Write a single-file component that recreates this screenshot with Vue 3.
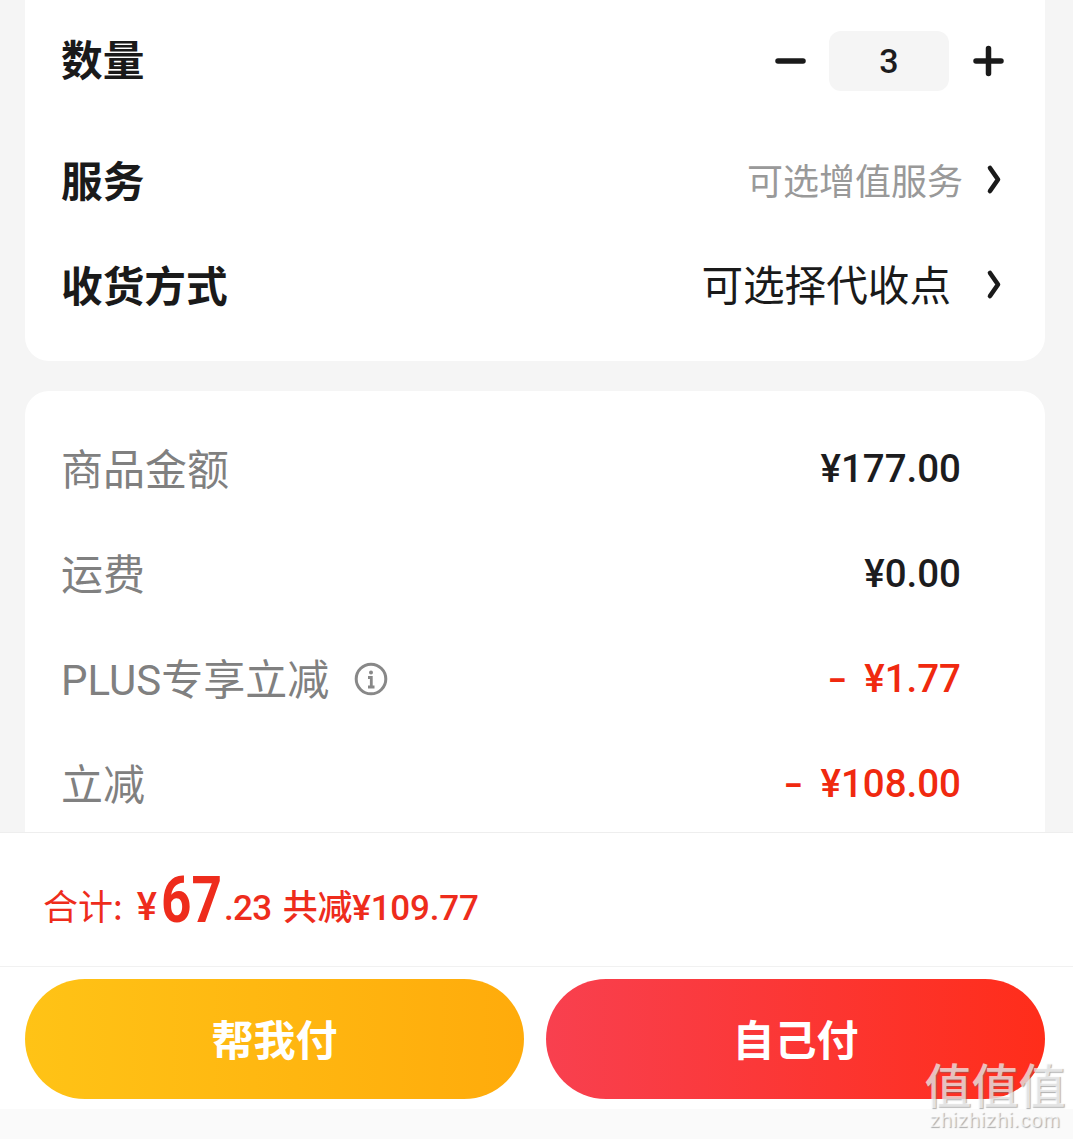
<template>
  <div class="page">
    <div class="scroll">
      <section class="card first">
        <div class="row qty">
          <span class="label strong">数量</span>
          <div class="stepper">
            <svg class="step" width="34" height="34" viewBox="0 0 34 34"><path d="M5 17H30" /></svg>
            <span class="num">3</span>
            <svg class="step" width="34" height="34" viewBox="0 0 34 34"><path d="M5 17H30M17.5 4.5V29.5" /></svg>
          </div>
        </div>
        <div class="row">
          <span class="label strong">服务</span>
          <div class="right">
            <span class="hint">可选增值服务</span>
            <svg class="chev" width="20" height="34" viewBox="0 0 20 34"><path d="M5 5L13 16.5L5 28" /></svg>
          </div>
        </div>
        <div class="row">
          <span class="label strong">收货方式</span>
          <div class="right">
            <span class="val">可选择代收点</span>
            <svg class="chev" width="20" height="34" viewBox="0 0 20 34"><path d="M5 5L13 16.5L5 28" /></svg>
          </div>
        </div>
      </section>
      <section class="card second">
        <div v-for="r in rows" :key="r.label" class="row price">
          <span class="label muted">{{ r.label }}<svg v-if="r.info" class="info" width="34" height="34" viewBox="0 0 34 34"><circle cx="17" cy="17" r="14.8" /><circle class="dot" cx="17" cy="10.5" r="2" /><path d="M14 15.5H17.3V24.5M14 25H20.5" /></svg></span>
          <span class="amt" :class="{ red: r.red }"><span v-if="r.red" class="minus">-</span>{{ r.amt }}</span>
        </div>
      </section>
    </div>
    <footer class="foot">
      <div class="total">
        <span>合计:</span>
        <span class="yen">¥</span><span class="big">67</span><span class="dec">.23</span>
        <span class="off">共减¥109.77</span>
      </div>
      <div class="actions">
        <button class="btn gold">帮我付</button>
        <button class="btn redbtn">自己付</button>
      </div>
      <div class="tail"></div>
    </footer>
    <div class="mark">
      <div class="mark-cn">值值值</div>
      <div class="mark-en">zhizhizhi.com</div>
    </div>
  </div>
</template>

<script setup>
const rows = [
  { label: '商品金额', amt: '¥177.00' },
  { label: '运费', amt: '¥0.00' },
  { label: 'PLUS专享立减', amt: '¥1.77', red: true, info: true },
  { label: '立减', amt: '¥108.00', red: true }
]
</script>

<style>
html, body { margin: 0; background: #f5f5f5; }
</style>

<style scoped>
.page {
  position: relative;
  width: 1073px;
  height: 1139px;
  overflow: hidden;
  display: flex;
  flex-direction: column;
  background: #f5f5f5;
  font-family: "Noto Sans CJK SC", "Noto Sans", sans-serif;
  color: #1c1c1e;
}
.scroll {
  height: 832px;
  flex: none;
  overflow: hidden;
  padding: 0 28px 0 25px;
  display: flex;
  flex-direction: column;
  gap: 30px;
}
.card { background: #fff; flex: none; }
.first {
  border-radius: 0 0 24px 24px;
  padding: 0 37px 22px 36px;
}
.second {
  border-radius: 24px;
  padding: 24px 84px 80px 36px;
}
.row {
  height: 105px;
  display: flex;
  align-items: center;
  justify-content: space-between;
}
.qty { height: 122px; margin-bottom: 7px; }
.label { font-size: 41.7px; line-height: 1; display: flex; align-items: center; }
.strong { font-weight: 700; color: #1a1a1a; margin-top: -4px; }
.muted { color: #808080; font-weight: 400; font-size: 42px; font-family: "Roboto", "Noto Sans CJK SC", sans-serif; margin-top: 6px; }
.stepper { display: flex; align-items: center; gap: 22px; margin-right: 3px; }
.step path { fill: none; stroke: #1a1a1a; stroke-width: 5.5; stroke-linecap: round; }
.num {
  width: 120px;
  height: 60px;
  border-radius: 12px;
  background: #f5f5f5;
  display: flex;
  align-items: center;
  justify-content: center;
  font-size: 34px;
  font-weight: 500;
  font-family: "Roboto", sans-serif;
}
.right { display: flex; align-items: center; }
.hint { font-size: 36px; color: #999; margin-right: 22px; margin-top: -6px; }
.val { font-size: 41.6px; color: #1a1a1a; margin-right: 34px; margin-top: -7px; }
.chev { margin-top: -4px; margin-right: 3px; }
.chev path { fill: none; stroke: #1a1a1a; stroke-width: 4.6; stroke-linecap: round; stroke-linejoin: round; }
.amt {
  font-family: "Roboto", sans-serif;
  font-weight: 500;
  font-size: 38.5px;
  color: #1c1c1e;
  margin-top: 1px;
}
.amt.red { color: #f0290f; }
.minus { display: inline-block; transform: scaleX(1.45); margin-right: 20px; }
.info { margin-left: 25px; margin-top: -4px; }
.info circle { fill: none; stroke: #888; stroke-width: 3; }
.info .dot { fill: #888; stroke: none; }
.info path { fill: none; stroke: #888; stroke-width: 2.8; }
.foot { flex: 1; display: flex; flex-direction: column; background: #fff; border-top: 1px solid #eeeeee; }
.total {
  height: 134px;
  flex: none;
  box-sizing: border-box;
  padding: 0 0 0 43px;
  display: flex;
  align-items: baseline;
  border-bottom: 1px solid #f1f1f1;
  color: #ee2c1c;
  font-size: 35px;
  line-height: 132px;
}
.yen { margin-left: 14px; font-family: "Roboto", sans-serif; font-weight: 500; font-size: 38px; margin-right: 4px; }
.big {
  display: inline-block;
  width: 60px;
  font-size: 64px;
  font-weight: 700;
  font-family: "Roboto", sans-serif;
  transform: translateY(2px) scaleX(0.83);
  transform-origin: left;
}
.dec { font-family: "Roboto", sans-serif; font-weight: 500; margin-left: 3px; letter-spacing: -0.6px; }
.off { margin-left: 11px; font-family: "Roboto", "Noto Sans CJK SC", sans-serif; font-weight: 500; letter-spacing: -0.2px; }
.actions {
  height: 142px;
  flex: none;
  box-sizing: border-box;
  padding: 12px 28px 0 25px;
  display: flex;
  gap: 22px;
  background: #fff;
}
.btn {
  flex: 1;
  height: 120px;
  border: 0;
  border-radius: 60px;
  color: #fff;
  font: 700 42px "Noto Sans CJK SC", sans-serif;
  padding: 0 0 4px;
}
.gold { background: linear-gradient(90deg, #ffc316, #ffab0b); }
.redbtn { background: linear-gradient(90deg, #f8404f, #ff2d1a); }
.tail { flex: 1; background: #fafafa; }
.mark {
  position: absolute;
  left: 922px;
  top: 1056px;
  width: 146px;
  color: rgba(255, 255, 255, 0.68);
  text-shadow: 1px 1px 1px rgba(110, 110, 110, 0.55);
  text-align: center;
  font-family: "Noto Sans CJK SC", sans-serif;
}
.mark-cn { font-size: 47px; font-weight: 500; line-height: 54px; white-space: nowrap; }
.mark-en { font: 20.5px/20px "Liberation Sans", sans-serif; letter-spacing: 0.6px; white-space: nowrap; }
</style>
